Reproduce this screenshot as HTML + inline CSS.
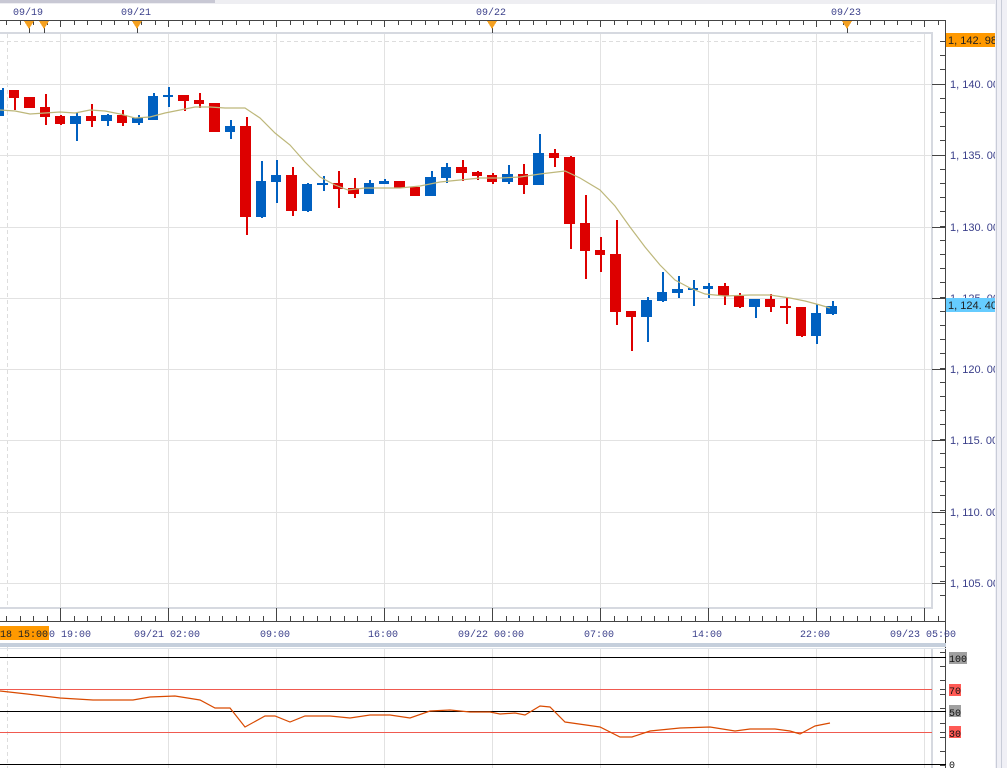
<!DOCTYPE html>
<html><head><meta charset="utf-8"><style>
html,body{margin:0;padding:0;background:#fff;}
body{width:1007px;height:768px;overflow:hidden;position:relative;}
svg{position:absolute;left:0;top:0;}
text{font-family:"Liberation Mono","DejaVu Sans Mono",monospace;font-size:10px;fill:#3a3f8a;}
text.a{font-family:"Liberation Sans",sans-serif;font-size:11px;}
</style></head><body>
<svg id="s" width="1007" height="768" viewBox="0 0 1007 768" xmlns="http://www.w3.org/2000/svg" shape-rendering="crispEdges">
<defs><clipPath id="ax"><rect x="946" y="0" width="49" height="768"/></clipPath><clipPath id="ob"><rect x="0" y="620" width="49" height="30"/></clipPath></defs>
<rect x="0" y="0" width="1007" height="4" fill="#eeeef2"/>
<rect x="0" y="0" width="215" height="3" fill="#c8c8d4"/>
<rect x="995" y="0" width="12" height="768" fill="#f0f0f6"/>
<line x1="996.5" y1="0" x2="996.5" y2="768" stroke="#c8ccd8"/>
<line x1="1001.5" y1="0" x2="1001.5" y2="768" stroke="#c8ccd8"/>
<text x="13" y="15">09/19</text>
<text x="121" y="15">09/21</text>
<text x="476" y="15">09/22</text>
<text x="831" y="15">09/23</text>
<line x1="0" y1="20.5" x2="946" y2="20.5" stroke="#444"/>
<line x1="945.5" y1="20" x2="945.5" y2="768" stroke="#444"/>
<rect x="0" y="32" width="933" height="2" fill="#d6d9e0"/>
<rect x="931" y="32" width="2" height="577" fill="#d6d9e0"/>
<rect x="0" y="607" width="933" height="2" fill="#d6d9e0"/>
<line x1="0" y1="41.5" x2="925" y2="41.5" stroke="#ddd" stroke-dasharray="4,3"/>
<line x1="7.5" y1="34" x2="7.5" y2="607" stroke="#ddd" stroke-dasharray="4,3"/>
<line x1="7.5" y1="647" x2="7.5" y2="768" stroke="#ddd" stroke-dasharray="4,3"/>
<g id="grid" stroke="#e2e2e2"></g>
<g id="ticks" stroke="#444"></g>
<line x1="0" y1="621.5" x2="946" y2="621.5" stroke="#444"/>
<rect x="0" y="643" width="946" height="4" fill="#c5cfdc"/>
<rect x="0" y="648" width="946" height="1" fill="#dde3ea"/>
<rect x="931" y="649" width="2" height="119" fill="#d6d9e0"/>
<g id="c"></g>
<polyline fill="none" stroke="#bdb77a" stroke-width="1.2" shape-rendering="auto" points="0,110 15,111 30,114 45,113 60,112 75,113 90,110 105,111 120,114 135,118 150,117 165,113 180,110 195,107 210,107 225,108 245,108 260,118 275,133 290,145 305,162 320,177 335,185 348,190 365,188 380,188 400,188 420,186 440,182 460,180 480,178 500,178 520,177 540,174 565,171 580,178 600,190 615,206 630,227 645,247 660,265 675,280 690,288 705,294 725,296 750,295 770,295 790,298 805,301 820,305 830,308"/>
<line x1="0" y1="657.5" x2="946" y2="657.5" stroke="#000"/>
<line x1="0" y1="689.5" x2="932" y2="689.5" stroke="#f05a50"/>
<line x1="0" y1="711.5" x2="946" y2="711.5" stroke="#000"/>
<line x1="0" y1="732.5" x2="932" y2="732.5" stroke="#f05a50"/>
<line x1="0" y1="764.5" x2="946" y2="764.5" stroke="#000"/>
<polyline fill="none" stroke="#d94a00" stroke-width="1.2" shape-rendering="auto" points="0,691 27,694 60,698 93,700 133,700 150,697 175,696 200,700 215,708 230,708 245,727 265,716 275,716 290,722 305,716 330,716 350,718 370,715 390,715 410,718 430,711 450,710 470,712 490,712 500,714 515,713 525,715 540,706 550,707 565,722 600,727 620,737 632,737 650,731 680,728 710,727 735,731 750,729 775,729 790,731 800,734 815,726 830,723"/>
<g clip-path="url(#ax)">
<rect x="945" y="33" width="50" height="14" fill="#ff9900"/>
<text class="a" x="948" y="44" style="fill:#222">1, 142. 98</text>
<text class="a" x="950" y="88">1, 140. 00</text>
<text class="a" x="950" y="159">1, 135. 00</text>
<text class="a" x="950" y="231">1, 130. 00</text>
<text class="a" x="950" y="302">1, 125. 00</text>
<rect x="945" y="298" width="50" height="14" fill="#66ccff"/>
<text class="a" x="948" y="309" style="fill:#222">1, 124. 40</text>
<text class="a" x="950" y="373">1, 120. 00</text>
<text class="a" x="950" y="444">1, 115. 00</text>
<text class="a" x="950" y="516">1, 110. 00</text>
<text class="a" x="950" y="587">1, 105. 00</text>
</g>
<text x="49" y="637">0 19:00</text>
<rect x="0" y="626" width="49" height="14" fill="#ff9900"/>
<text x="0" y="637" style="fill:#222" clip-path="url(#ob)">18 15:00</text>
<text x="134" y="637">09/21 02:00</text>
<text x="260" y="637">09:00</text>
<text x="368" y="637">16:00</text>
<text x="458" y="637">09/22 00:00</text>
<text x="584" y="637">07:00</text>
<text x="692" y="637">14:00</text>
<text x="800" y="637">22:00</text>
<text x="890" y="637">09/23 05:00</text>
<rect x="949" y="652" width="18" height="12" fill="#a0a0a0"/>
<text x="949" y="662" style="fill:#111">100</text>
<rect x="949" y="684" width="12" height="12" fill="#ff5a55"/>
<text x="949" y="694" style="fill:#111">70</text>
<rect x="949" y="705" width="12" height="12" fill="#a0a0a0"/>
<text x="949" y="716" style="fill:#111">50</text>
<rect x="949" y="726" width="12" height="12" fill="#ff5a55"/>
<text x="949" y="737" style="fill:#111">30</text>
<text x="949" y="768" style="fill:#111">0</text>
<g id="mk" fill="#f4a020"></g>
</svg>
<script>
var NS="http://www.w3.org/2000/svg";
function el(p,t,a){var e=document.createElementNS(NS,t);for(var k in a)e.setAttribute(k,a[k]);document.getElementById(p).appendChild(e);}
var vx=[60,168,276,384,492,600,708,816,924];
vx.forEach(function(x){el('grid','line',{x1:x+.5,y1:34,x2:x+.5,y2:607});el('grid','line',{x1:x+.5,y1:649,x2:x+.5,y2:768});});
[84,155,227,298,369,440,512,583].forEach(function(y){el('grid','line',{x1:0,y1:y+.5,x2:931,y2:y+.5});el('ticks','line',{x1:932,y1:y+.5,x2:946,y2:y+.5});});
for(var y=41;y<768;y+=14.2){if(y>608&&y<650)continue;el('ticks','line',{x1:940,y1:Math.round(y)+.5,x2:946,y2:Math.round(y)+.5});}
[657,689,711,732,764].forEach(function(y){el('ticks','line',{x1:940,y1:y+.5,x2:946,y2:y+.5});});
for(var x=6;x<946;x+=13.5){var X=Math.round(x)+.5;el('ticks','line',{x1:X,y1:21,x2:X,y2:25});el('ticks','line',{x1:X,y1:616,x2:X,y2:621});}
vx.forEach(function(x){el('ticks','line',{x1:x+.5,y1:608,x2:x+.5,y2:621});el('ticks','line',{x1:x+.5,y1:21,x2:x+.5,y2:27});});
[29,44,137,492,847].forEach(function(x){el('mk','polygon',{points:(x-5)+',21 '+(x+5)+',21 '+x+',29'});el('ticks','line',{x1:x+.5,y1:27,x2:x+.5,y2:33});});
var C=[[0,4,90,116,88,116,'b'],[9,19,90,98,90,110,'r'],[24,35,97,108,97,108,'r'],[40,50,107,117,94,125,'r'],[55,65,116,124,115,125,'r'],[70,81,116,124,113,141,'b'],[86,96,116,121,104,127,'r'],[101,112,115,121,114,126,'b'],[117,127,115,123,110,126,'r'],[132,143,118,123,115,125,'b'],[148,158,96,120,93,120,'b'],[163,173,95,97,87,107,'b'],[178,189,95,101,95,111,'r'],[194,204,100,104,93,108,'r'],[209,220,103,132,103,132,'r'],[225,235,126,132,120,139,'b'],[240,251,126,217,117,235,'r'],[256,266,181,217,161,218,'b'],[271,281,175,182,160,203,'b'],[286,297,175,211,167,216,'r'],[302,312,184,211,183,212,'b'],[317,328,183,185,176,191,'b'],[333,343,183,189,171,208,'r'],[348,359,188,194,178,198,'r'],[364,374,183,194,180,194,'b'],[379,389,181,184,179,184,'b'],[394,405,181,188,181,188,'r'],[410,420,187,196,187,196,'r'],[425,436,177,196,171,196,'b'],[441,451,167,178,163,183,'b'],[456,467,167,173,160,181,'r'],[472,482,172,176,171,180,'r'],[487,497,175,182,173,184,'r'],[502,513,174,182,165,184,'b'],[518,528,174,185,164,194,'r'],[533,544,153,185,134,185,'b'],[549,559,153,158,149,167,'r'],[564,575,157,224,156,249,'r'],[580,590,223,251,195,279,'r'],[595,605,250,255,237,272,'r'],[610,621,254,312,220,325,'r'],[626,636,311,317,311,351,'r'],[641,652,300,317,297,342,'b'],[657,667,292,301,272,302,'b'],[672,683,289,293,276,298,'b'],[688,698,288,290,280,306,'b'],[703,713,286,289,283,298,'b'],[718,729,286,296,283,305,'r'],[734,744,296,307,293,308,'r'],[749,760,299,307,299,318,'b'],[765,775,299,307,294,312,'r'],[780,791,306,308,298,324,'r'],[796,806,307,336,307,337,'r'],[811,821,313,336,304,344,'b'],[826,837,306,314,301,315,'b']];
C.forEach(function(c){var col=c[6]=='r'?'#dd0000':'#0060c0';var m=Math.round((c[0]+c[1])/2);
el('c','rect',{x:m,y:c[4],width:2,height:c[5]-c[4],fill:col});
el('c','rect',{x:c[0],y:c[2],width:c[1]-c[0],height:Math.max(2,c[3]-c[2]),fill:col});});
</script>
</body></html>
